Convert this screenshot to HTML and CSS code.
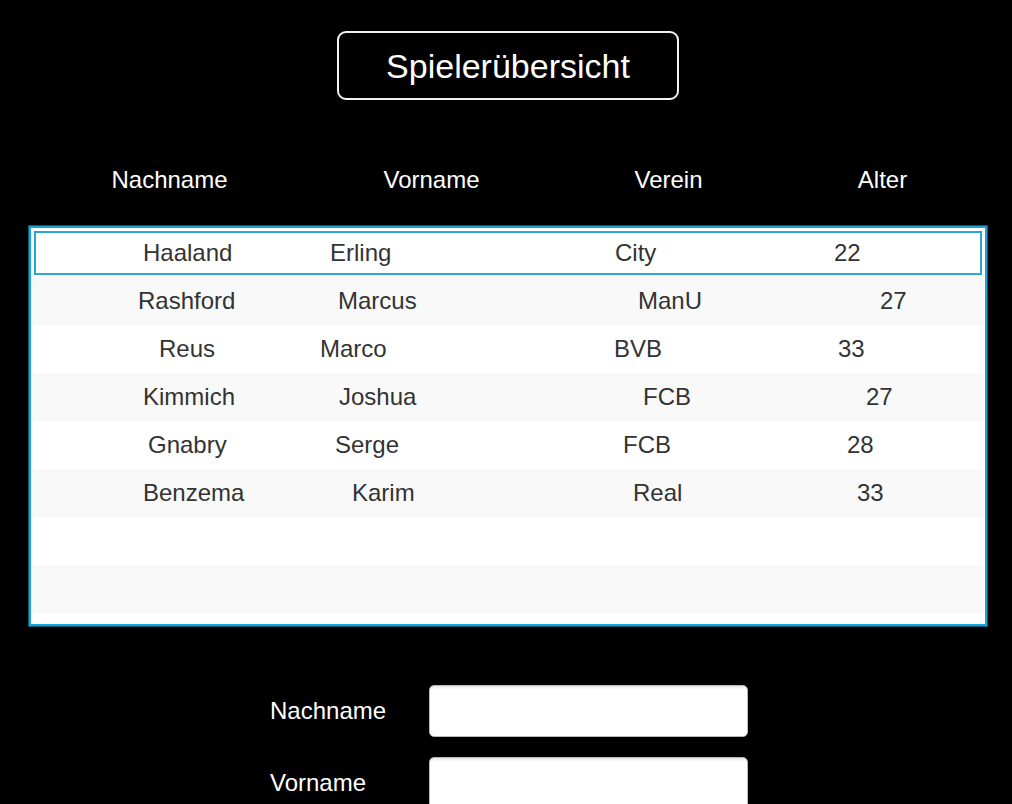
FILE: index.html
```html
<!DOCTYPE html>
<html lang="de">
<head>
<meta charset="utf-8">
<title>Spielerübersicht</title>
<link rel="stylesheet" href="styles.css">
</head>
<body>
<div class="page">
  <div class="title">Spielerübersicht</div>

  <div class="headers">
    <div>Nachname</div>
    <div>Vorname</div>
    <div>Verein</div>
    <div>Alter</div>
  </div>

  <div class="table">
    <div class="row selected">
      <span style="padding-left:111px">Haaland</span>
      <span style="padding-left:30px">Erling</span>
      <span style="padding-left:35px">City</span>
      <span style="padding-left:34px">22</span>
    </div>
    <div class="row">
      <span style="padding-left:106px">Rashford</span>
      <span style="padding-left:38px">Marcus</span>
      <span style="padding-left:58px">ManU</span>
      <span style="padding-left:80px">27</span>
    </div>
    <div class="row">
      <span style="padding-left:127px">Reus</span>
      <span style="padding-left:20px">Marco</span>
      <span style="padding-left:34px">BVB</span>
      <span style="padding-left:38px">33</span>
    </div>
    <div class="row">
      <span style="padding-left:111px">Kimmich</span>
      <span style="padding-left:39px">Joshua</span>
      <span style="padding-left:63px">FCB</span>
      <span style="padding-left:66px">27</span>
    </div>
    <div class="row">
      <span style="padding-left:116px">Gnabry</span>
      <span style="padding-left:35px">Serge</span>
      <span style="padding-left:43px">FCB</span>
      <span style="padding-left:47px">28</span>
    </div>
    <div class="row">
      <span style="padding-left:111px">Benzema</span>
      <span style="padding-left:52px">Karim</span>
      <span style="padding-left:53px">Real</span>
      <span style="padding-left:57px">33</span>
    </div>
    <div class="row"></div>
    <div class="row"></div>
  </div>

  <div class="form">
    <label class="label">Nachname</label>
    <div class="field"></div>
    <label class="label">Vorname</label>
    <div class="field"></div>
  </div>
</div>
</body>
</html>
```
FILE: styles.css
```css
html, body {
  margin: 0;
  padding: 0;
  background: #000;
  height: 100%;
  overflow: hidden;
}

body {
  font-family: "Liberation Sans", Arial, sans-serif;
}

.page {
  display: flex;
  flex-direction: column;
  padding-top: 31px;
}

.title {
  align-self: flex-start;
  margin-left: 337px;
  width: 342px;
  height: 69px;
  box-sizing: border-box;
  border: 2px solid #f2f2f2;
  border-radius: 9px;
  display: flex;
  align-items: center;
  justify-content: center;
  color: #fff;
  font-size: 34px;
  padding-top: 1px;
}

.headers {
  margin-top: 66px;
  display: grid;
  grid-template-columns: 259px 265px 209px 219px;
  padding-left: 40px;
  color: #fff;
  font-size: 24px;
  line-height: 28px;
  text-align: center;
}

.table {
  margin-top: 32px;
  margin-left: 29px;
  width: 958px;
  height: 400px;
  box-sizing: border-box;
  border: 2px solid #1ba3d6;
  box-shadow: 0 0 0 1px #0c5877;
  padding: 1px;
  background: #fff;
  display: flex;
  flex-direction: column;
}

.row {
  height: 48px;
  flex: none;
  display: grid;
  grid-template-columns: 268px 280px 220px 184px;
  align-items: center;
  color: #333;
  font-size: 24px;
  background: #fff;
}

.row:nth-child(even) {
  background: #f9f9f9;
}

.row span {
  white-space: nowrap;
}

.row.selected {
  box-shadow: inset 0 0 0 2px #fff, inset 0 0 0 4px #2ba6d4;
}

.form {
  margin-top: 59px;
  margin-left: 270px;
  display: grid;
  grid-template-columns: 159px 319px;
  row-gap: 20px;
  align-items: center;
}

.label {
  color: #fff;
  font-size: 24px;
}

.field {
  height: 52px;
  box-sizing: border-box;
  border: 1px solid #b8b8b8;
  border-radius: 5px;
  background: linear-gradient(#e8e8e8, #fff 4px);
}
```
